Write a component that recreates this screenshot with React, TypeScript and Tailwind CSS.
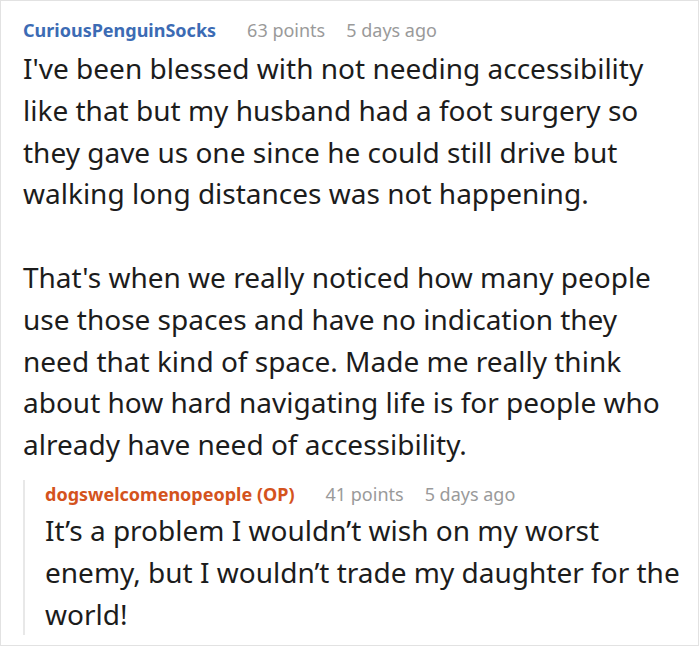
export default function App() {
  return (
    <div className="w-[700px] h-[646px] bg-white">
      <div className="h-[646px] w-[699px] border border-[#e2e2e2] pl-[22px] pr-[10px] pt-[15px] font-['Noto_Sans','Open_Sans',sans-serif] text-[#1c1c1c]">
        <div className="flex items-baseline text-[18px] leading-[28px]">
          <span className="font-bold text-[#3c6bb4]">CuriousPenguinSocks</span>
          <span className="ml-[31px] text-[#9a9a9a]">63 points</span>
          <span className="ml-[21px] text-[#9a9a9a]">5 days ago</span>
        </div>
        <div className="mt-[4px] text-[28px] leading-[41.8px]">
          <p>
            I've been blessed with not needing accessibility like that but my
            husband had a foot surgery so they gave us one since he could still
            drive but walking long distances was not happening.
          </p>
          <p className="mt-[41.8px]">
            That's when we really noticed how many people use those spaces and
            have no indication they need that kind of space. Made me really
            think about how hard navigating life is for people who already have
            need of accessibility.
          </p>
        </div>
        <div className="mt-[28px] border-l-2 border-[#e8e8e8] pl-[20px]">
          <div className="-mt-[14px] flex items-baseline text-[18px] leading-[28px]">
            <span className="font-bold text-[#d4531d]">
              dogswelcomenopeople (OP)
            </span>
            <span className="ml-[31px] text-[#9a9a9a]">41 points</span>
            <span className="ml-[21px] text-[#9a9a9a]">5 days ago</span>
          </div>
          <p className="mt-[2px] -mb-[6px] text-[28px] leading-[41.8px]">
            It’s a problem I wouldn’t wish on my worst enemy, but I wouldn’t
            trade my daughter for the world!
          </p>
        </div>
      </div>
    </div>
  );
}
